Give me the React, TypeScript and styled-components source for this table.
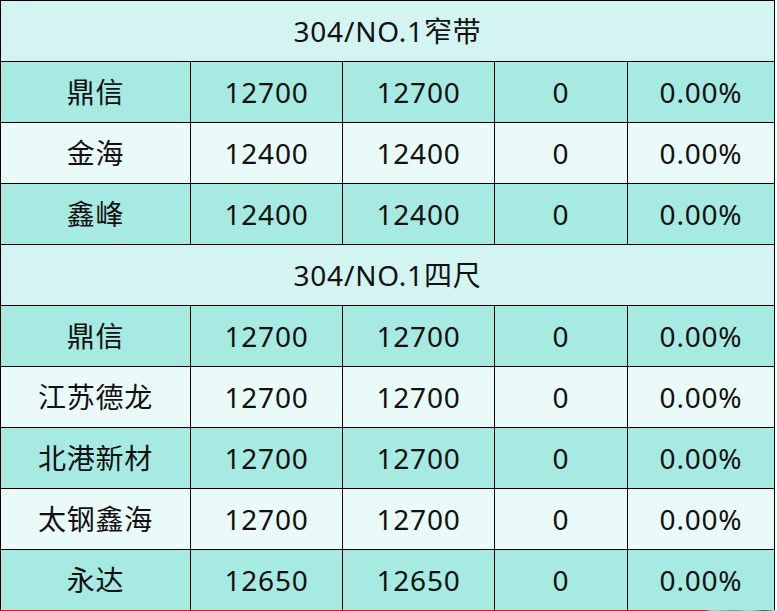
import React from 'react';
import styled, { createGlobalStyle } from 'styled-components';

const GlobalStyle = createGlobalStyle`
  html, body {
    margin: 0;
    padding: 0;
    background: #ffffff;
  }
  body {
    font-family: "Noto Sans", "Noto Sans CJK SC", sans-serif;
    color: #111;
  }
`;

type Row = {
  name: string;
  a: string;
  b: string;
  diff: string;
  pct: string;
};

type Group = {
  title: string;
  rows: Row[];
};

const groups: Group[] = [
  {
    title: '304/NO.1窄带',
    rows: [
      { name: '鼎信', a: '12700', b: '12700', diff: '0', pct: '0.00%' },
      { name: '金海', a: '12400', b: '12400', diff: '0', pct: '0.00%' },
      { name: '鑫峰', a: '12400', b: '12400', diff: '0', pct: '0.00%' },
    ],
  },
  {
    title: '304/NO.1四尺',
    rows: [
      { name: '鼎信', a: '12700', b: '12700', diff: '0', pct: '0.00%' },
      { name: '江苏德龙', a: '12700', b: '12700', diff: '0', pct: '0.00%' },
      { name: '北港新材', a: '12700', b: '12700', diff: '0', pct: '0.00%' },
      { name: '太钢鑫海', a: '12700', b: '12700', diff: '0', pct: '0.00%' },
      { name: '永达', a: '12650', b: '12650', diff: '0', pct: '0.00%' },
    ],
  },
];

const App = () => {
  return (
    <>
      <GlobalStyle />
      <Table>
        {groups.map(group => (
          <React.Fragment key={group.title}>
            <Title>{group.title}</Title>
            {group.rows.map((row, i) => (
              <React.Fragment key={group.title + row.name}>
                <Cell $shade={i % 2 === 0}>{row.name}</Cell>
                <Cell $shade={i % 2 === 0}>{row.a}</Cell>
                <Cell $shade={i % 2 === 0}>{row.b}</Cell>
                <Cell $shade={i % 2 === 0}>{row.diff}</Cell>
                <Cell $shade={i % 2 === 0}>{row.pct}</Cell>
              </React.Fragment>
            ))}
          </React.Fragment>
        ))}
      </Table>
      <Strip />
    </>
  );
};

export default App;

const Table = styled.div`
  display: grid;
  grid-template-columns: 190px 152px 152px 133px 147px;
  grid-template-rows: repeat(9, 61px) 60px;
  width: 775px;
  box-sizing: border-box;
  border-top: 1px solid #000;
  border-left: 1px solid #000;

  & > div:nth-last-child(-n + 5) {
    border-bottom: none;
  }
`;

const Cell = styled.div<{ $shade: boolean }>`
  box-sizing: border-box;
  display: flex;
  align-items: center;
  justify-content: center;
  border-right: 1px solid #000;
  border-bottom: 1px solid #000;
  background: ${p => (p.$shade ? '#a7eae2' : '#eafaf8')};
  font-size: 28px;
  line-height: 1;
  letter-spacing: 0.8px;
`;

const Title = styled.div`
  grid-column: 1 / -1;
  box-sizing: border-box;
  display: flex;
  align-items: center;
  justify-content: center;
  border-right: 1px solid #000;
  border-bottom: 1px solid #000;
  background: #d3f4f1;
  font-size: 28px;
  line-height: 1;
  letter-spacing: 0.8px;
`;

const Strip = styled.div`
  width: 777px;
  height: 1px;
  background: linear-gradient(
    to right,
    #e8141c 0,
    #e8141c 705px,
    #c9c9c9 712px,
    #8a8a8a 735px,
    #d0d0d0 750px,
    #555 765px,
    #ddd 777px
  );
`;
